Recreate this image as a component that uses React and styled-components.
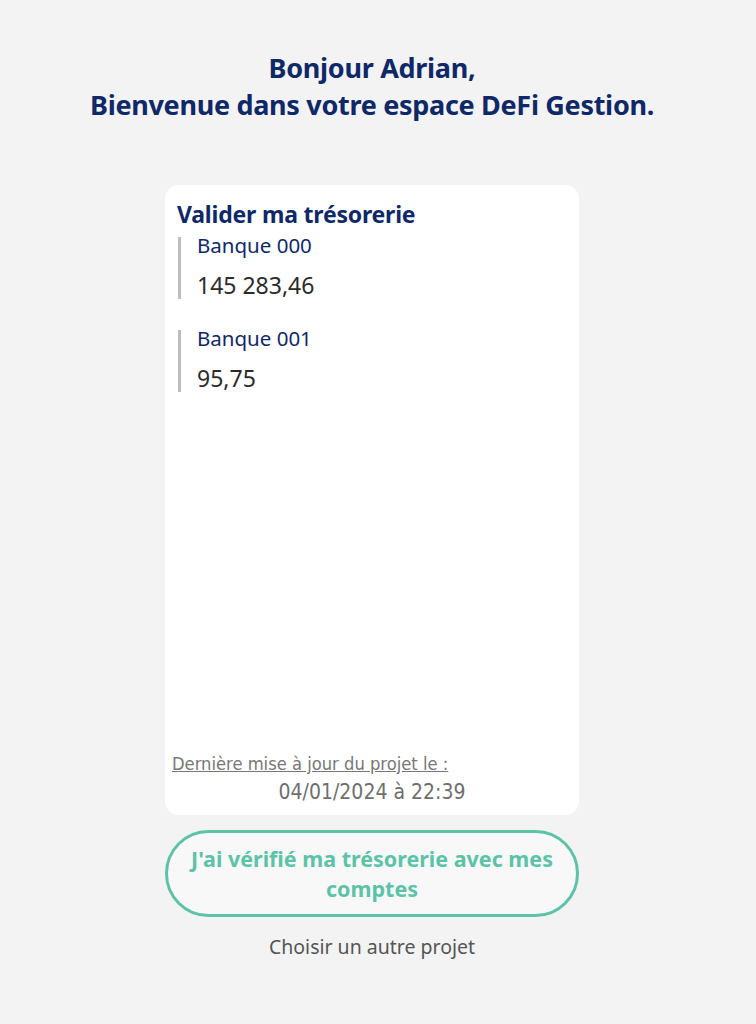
import React from 'react';
import styled, { createGlobalStyle } from 'styled-components';

const NAVY = '#0f2868';
const TEAL = '#5cc3a8';

const accounts = [
  { name: 'Banque 000', amount: '145 283,46' },
  { name: 'Banque 001', amount: '95,75' },
];

const GlobalStyle = createGlobalStyle`
  html, body {
    margin: 0;
    padding: 0;
    background-color: #f3f3f3;
  }

  body {
    font-family: 'Noto Sans', 'Open Sans', sans-serif;
  }
`;

const Page = styled.div`
  min-height: 1024px;
  display: flex;
  flex-direction: column;
  align-items: center;
  padding: 49px 12px 0 0;
  box-sizing: border-box;
`;

const Greeting = styled.h1`
  margin: 0;
  font-size: 27px;
  line-height: 37px;
  font-weight: 700;
  color: ${NAVY};
  text-align: center;
  letter-spacing: -0.3px;
`;

const Card = styled.section`
  margin-top: 62px;
  width: 414px;
  height: 630px;
  box-sizing: border-box;
  background-color: white;
  border-radius: 14px;
  padding: 13px 12px 10px;
  display: flex;
  flex-direction: column;
`;

const CardTitle = styled.h2`
  margin: 0;
  font-size: 23px;
  line-height: 32px;
  font-weight: 700;
  color: ${NAVY};
  letter-spacing: -0.2px;
`;

const AccountList = styled.div`
  display: flex;
  flex-direction: column;
  gap: 31px;
  margin-top: 7px;
  flex: 1;
`;

const Account = styled.div`
  border-left: 3px solid #bdbdbd;
  margin-left: 1px;
  padding-left: 16px;
  height: 62px;
  display: flex;
  flex-direction: column;
  justify-content: space-between;
`;

const AccountName = styled.div`
  font-size: 20.5px;
  line-height: 20px;
  color: ${NAVY};
  margin-top: -2px;
`;

const AccountAmount = styled.div`
  font-size: 23px;
  line-height: 24px;
  color: #2b2b2b;
  margin-bottom: 2px;
`;

const Footer = styled.div`
  font-family: 'DejaVu Sans Condensed', 'Roboto', sans-serif;
  color: #777;
`;

const UpdatedLabel = styled.div`
  font-size: 18.2px;
  line-height: 20px;
  text-decoration: underline;
  margin-left: -5px;
`;

const UpdatedDate = styled.div`
  font-size: 21px;
  line-height: 26px;
  margin-top: 5px;
  text-align: center;
  color: #6e6e6e;
`;

const ConfirmButton = styled.button`
  margin-top: 15px;
  width: 414px;
  height: 87px;
  box-sizing: border-box;
  border: 3px solid ${TEAL};
  border-radius: 44px;
  background-color: #f8f8f8;
  color: ${TEAL};
  font-family: 'Noto Sans', 'Open Sans', sans-serif;
  font-size: 21.5px;
  line-height: 30px;
  font-weight: 700;
  padding: 1px 14px 0;
  cursor: pointer;
`;

const OtherProject = styled.a`
  margin-top: 16px;
  font-size: 19.5px;
  color: #555;
  cursor: pointer;
`;

export default function App() {
  return (
    <>
      <GlobalStyle />
      <Page>
        <Greeting>
          Bonjour Adrian,
          <br />
          Bienvenue dans votre espace DeFi Gestion.
        </Greeting>
        <Card>
          <CardTitle>Valider ma trésorerie</CardTitle>
          <AccountList>
            {accounts.map(a => (
              <Account key={a.name}>
                <AccountName>{a.name}</AccountName>
                <AccountAmount>{a.amount}</AccountAmount>
              </Account>
            ))}
          </AccountList>
          <Footer>
            <UpdatedLabel>Dernière mise à jour du projet le :</UpdatedLabel>
            <UpdatedDate>04/01/2024 à 22:39</UpdatedDate>
          </Footer>
        </Card>
        <ConfirmButton>J'ai vérifié ma trésorerie avec mes comptes</ConfirmButton>
        <OtherProject>Choisir un autre projet</OtherProject>
      </Page>
    </>
  );
}
